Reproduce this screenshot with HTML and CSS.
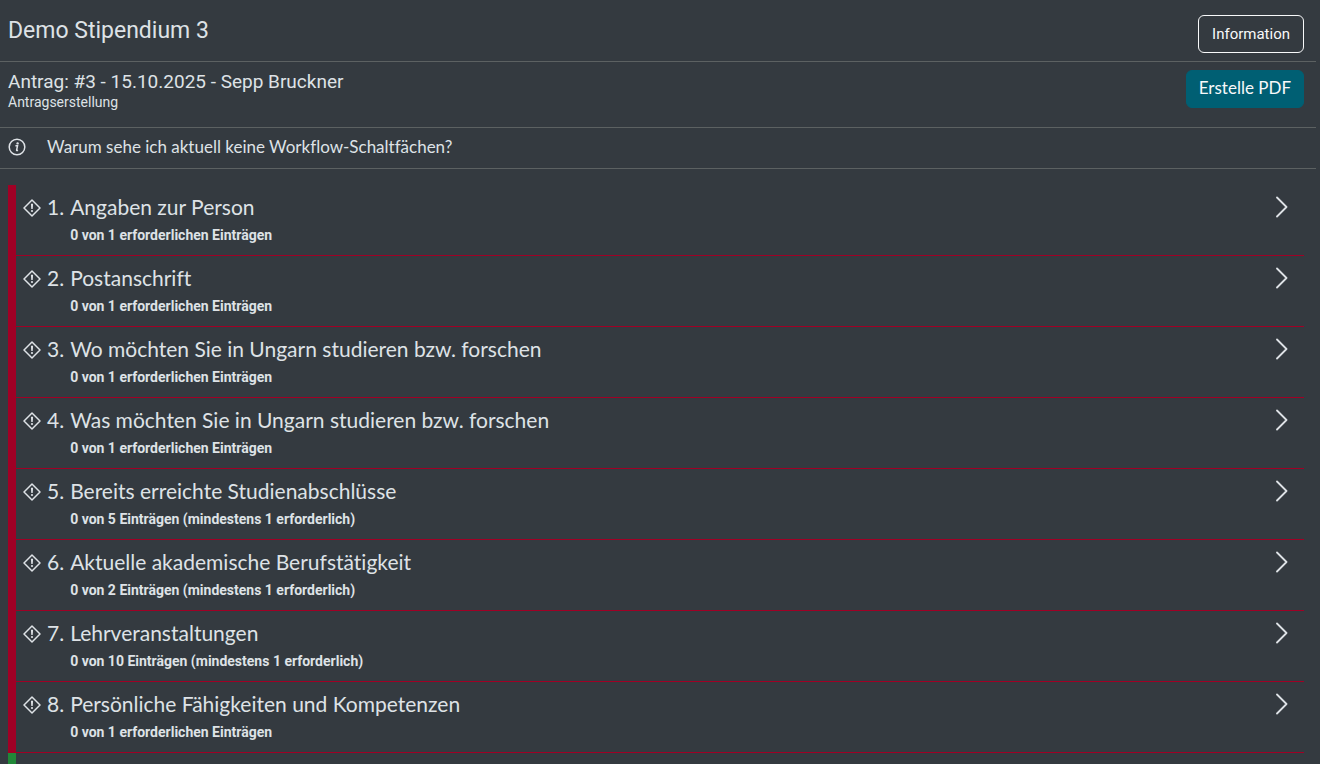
FILE: index.html
```html
<!DOCTYPE html>
<html lang="de">
<head>
  <meta charset="UTF-8">
  <meta name="viewport" content="width=device-width, initial-scale=1">
  <title>Demo Stipendium 3</title>
  <link rel="stylesheet" href="styles.css">
</head>
<body>
  <!-- Icons used several times on the page -->
  <svg class="icon-defs" aria-hidden="true">
    <symbol id="icon-warning" viewBox="0 0 18 18">
      <path d="M9 1 L17 9 L9 17 L1 9 Z" fill="none" stroke="currentColor" stroke-width="1.5" stroke-linejoin="round"/>
      <path d="M7.9 4.8 H10.1 L9.7 10 H8.3 Z" fill="currentColor"/>
      <circle cx="9" cy="12" r="1.1" fill="currentColor"/>
    </symbol>
    <symbol id="icon-chevron" viewBox="0 0 12 22">
      <path d="M1 1.5 L10.5 11 L1 20.5" fill="none" stroke="currentColor" stroke-width="1.8" stroke-linecap="round" stroke-linejoin="round"/>
    </symbol>
  </svg>

  <main class="page">
    <header class="bar title-bar">
      <h1>Demo Stipendium 3</h1>
      <button type="button" class="btn btn-outline">Information</button>
    </header>

    <section class="bar application-bar">
      <div>
        <h2>Antrag: #3 - 15.10.2025 - Sepp Bruckner</h2>
        <p class="status">Antragserstellung</p>
      </div>
      <button type="button" class="btn btn-primary">Erstelle PDF</button>
    </section>

    <div class="info-bar">
      <svg class="icon-info" viewBox="0 0 18 18" aria-hidden="true">
        <circle cx="9" cy="9" r="7.8" fill="none" stroke="currentColor" stroke-width="1.5"/>
        <circle cx="9.6" cy="5.4" r="1.2" fill="currentColor"/>
        <path d="M7.4 7.8 H9.5 L8.6 12 Q8.5 12.9 10 12.3" fill="none" stroke="currentColor" stroke-width="1.5"/>
      </svg>
      <span>Warum sehe ich aktuell keine Workflow-Schaltfächen?</span>
    </div>

    <div class="steps">
      <a href="#person" class="step">
        <svg class="icon-warning" aria-hidden="true"><use href="#icon-warning"/></svg>
        <span class="number">1.</span>
        <span class="step-text"><span class="name">Angaben zur Person</span><small>0 von 1 erforderlichen Einträgen</small></span>
        <svg class="icon-chevron" aria-hidden="true"><use href="#icon-chevron"/></svg>
      </a>
      <a href="#postanschrift" class="step">
        <svg class="icon-warning" aria-hidden="true"><use href="#icon-warning"/></svg>
        <span class="number">2.</span>
        <span class="step-text"><span class="name">Postanschrift</span><small>0 von 1 erforderlichen Einträgen</small></span>
        <svg class="icon-chevron" aria-hidden="true"><use href="#icon-chevron"/></svg>
      </a>
      <a href="#wo" class="step">
        <svg class="icon-warning" aria-hidden="true"><use href="#icon-warning"/></svg>
        <span class="number">3.</span>
        <span class="step-text"><span class="name">Wo möchten Sie in Ungarn studieren bzw. forschen</span><small>0 von 1 erforderlichen Einträgen</small></span>
        <svg class="icon-chevron" aria-hidden="true"><use href="#icon-chevron"/></svg>
      </a>
      <a href="#was" class="step">
        <svg class="icon-warning" aria-hidden="true"><use href="#icon-warning"/></svg>
        <span class="number">4.</span>
        <span class="step-text"><span class="name">Was möchten Sie in Ungarn studieren bzw. forschen</span><small>0 von 1 erforderlichen Einträgen</small></span>
        <svg class="icon-chevron" aria-hidden="true"><use href="#icon-chevron"/></svg>
      </a>
      <a href="#abschluesse" class="step">
        <svg class="icon-warning" aria-hidden="true"><use href="#icon-warning"/></svg>
        <span class="number">5.</span>
        <span class="step-text"><span class="name">Bereits erreichte Studienabschlüsse</span><small>0 von 5 Einträgen (mindestens 1 erforderlich)</small></span>
        <svg class="icon-chevron" aria-hidden="true"><use href="#icon-chevron"/></svg>
      </a>
      <a href="#beruf" class="step">
        <svg class="icon-warning" aria-hidden="true"><use href="#icon-warning"/></svg>
        <span class="number">6.</span>
        <span class="step-text"><span class="name">Aktuelle akademische Berufstätigkeit</span><small>0 von 2 Einträgen (mindestens 1 erforderlich)</small></span>
        <svg class="icon-chevron" aria-hidden="true"><use href="#icon-chevron"/></svg>
      </a>
      <a href="#lehre" class="step">
        <svg class="icon-warning" aria-hidden="true"><use href="#icon-warning"/></svg>
        <span class="number">7.</span>
        <span class="step-text"><span class="name">Lehrveranstaltungen</span><small>0 von 10 Einträgen (mindestens 1 erforderlich)</small></span>
        <svg class="icon-chevron" aria-hidden="true"><use href="#icon-chevron"/></svg>
      </a>
      <a href="#kompetenzen" class="step">
        <svg class="icon-warning" aria-hidden="true"><use href="#icon-warning"/></svg>
        <span class="number">8.</span>
        <span class="step-text"><span class="name">Persönliche Fähigkeiten und Kompetenzen</span><small>0 von 1 erforderlichen Einträgen</small></span>
        <svg class="icon-chevron" aria-hidden="true"><use href="#icon-chevron"/></svg>
      </a>
      <div class="step-done"></div>
    </div>
  </main>
</body>
</html>
```
FILE: styles.css
```css
* {
  box-sizing: border-box;
}
body {
  margin: 0;
  background: #343a40;
  color: #dee2e6;
  font-family: Lato, sans-serif;
  font-size: 17px;
  font-variant-ligatures: none;
  line-height: 24px;
}
h1, h2, p {
  margin: 0;
  font-weight: 400;
}
.icon-defs {
  position: absolute;
  width: 0;
  height: 0;
}
.page {
  display: flex;
  flex-direction: column;
  min-height: 100vh;
  margin-right: 4px;
}

/* Header bars */
.bar {
  display: flex;
  justify-content: space-between;
  align-items: flex-start;
  border-bottom: 1px solid #5c6162;
}
.title-bar {
  padding: 15px 12px 8px 8px;
}
.application-bar {
  padding: 8px 12px 17px 8px;
}
h1, h2, .status, .btn-outline {
  font-family: Roboto, sans-serif;
}
h1 {
  font-size: 23px;
  line-height: 32px;
}
h2 {
  font-size: 19px;
  line-height: 24px;
}
.status {
  font-size: 14px;
  line-height: 16px;
}
.btn {
  height: 38px;
  padding: 0 13px;
  border: 1px solid #f8f9fa;
  border-radius: 6px;
  background: transparent;
  color: #f8f9fa;
  font-size: 15px;
}
.btn-primary {
  padding: 0 12px 3px;
  border-color: #005f73;
  background: #005f73;
  font-family: Lato, sans-serif;
  font-size: 17px;
}

/* Hint line */
.info-bar {
  display: flex;
  align-items: center;
  gap: 21px;
  height: 41px;
  padding: 0 8px 2px;
  border-bottom: 1px solid #5c6162;
}
.icon-info {
  width: 18px;
  height: 18px;
}

/* Steps */
.steps {
  display: flex;
  flex: 1;
  flex-direction: column;
  margin: 16px 12px 0 8px;
}
.step {
  display: flex;
  align-items: flex-start;
  height: 71px;
  padding: 9px 16px 0 7px;
  border-left: 8px solid #a00025;
  border-bottom: 1px solid #a00025;
  color: inherit;
  text-decoration: none;
}
.step-done {
  flex: 1;
  border-left: 8px solid #218838;
}
.icon-warning {
  width: 18px;
  height: 18px;
  margin: 5px 6px 0 0;
}
.number {
  margin-right: 6px;
}
.number, .name {
  font-size: 21px;
  line-height: 26px;
}
.step-text {
  display: flex;
  flex: 1;
  flex-direction: column;
}
.step small {
  font-family: Roboto, sans-serif;
  font-size: 14px;
  font-weight: 700;
  line-height: 30px;
}
.icon-chevron {
  width: 12px;
  height: 22px;
  margin-top: 2px;
}
```
